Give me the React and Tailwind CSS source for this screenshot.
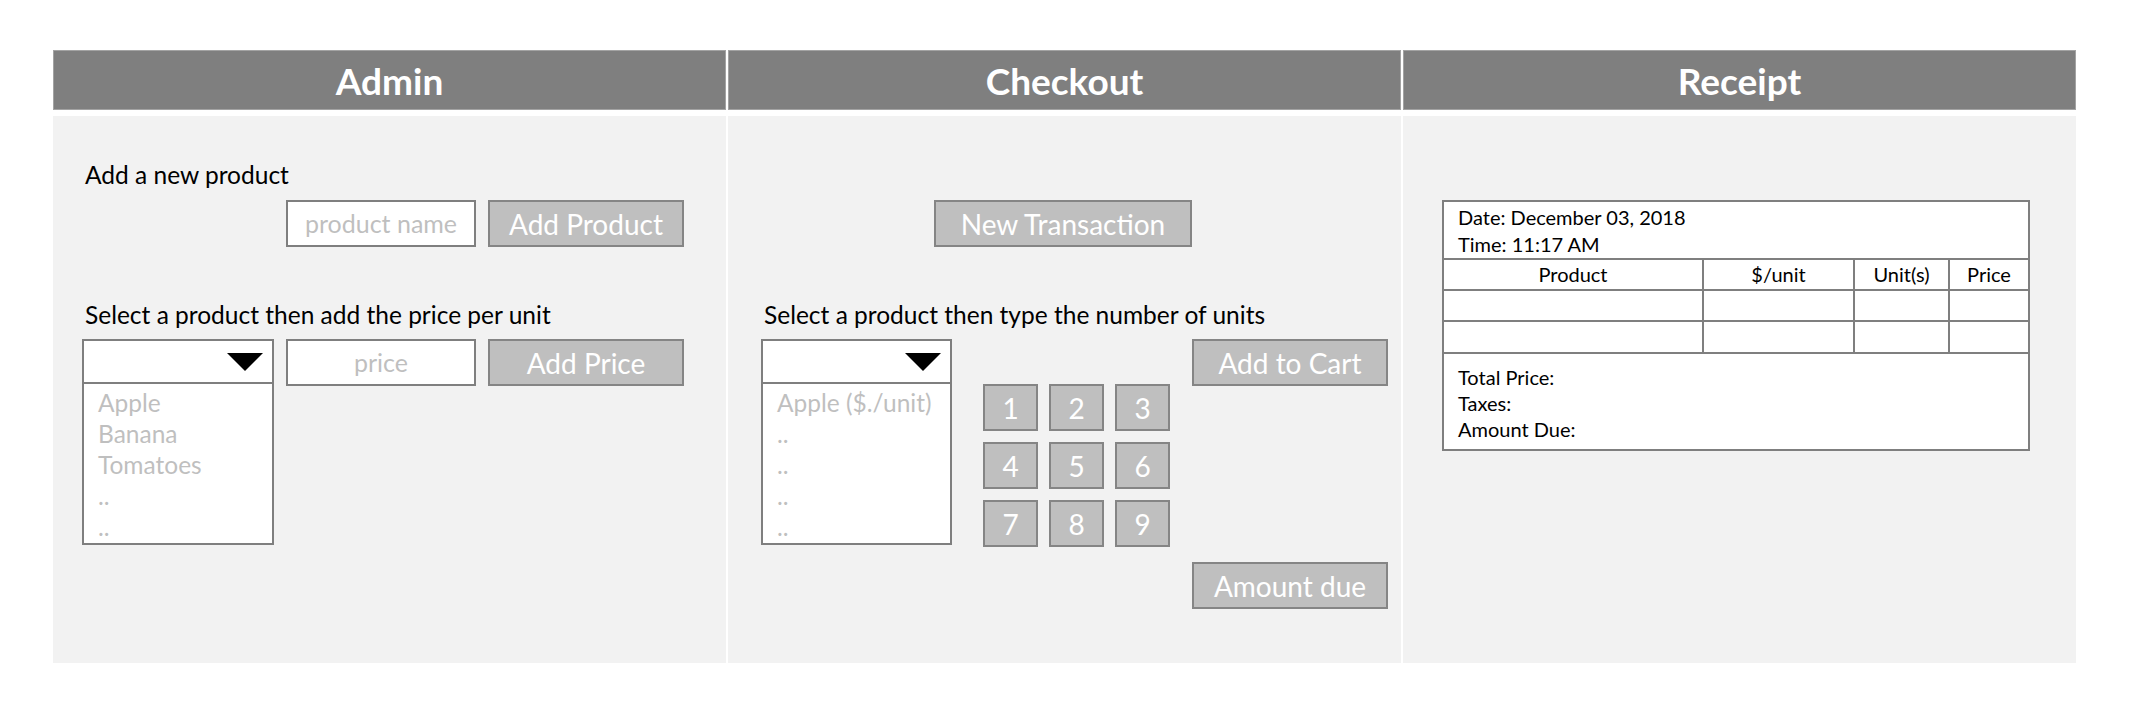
const btn =
  "flex items-center justify-center border-2 border-[#858585] bg-[#bfbfbf] text-white";
const field =
  "flex items-center justify-center border-2 border-[#7f7f7f] bg-white text-[#bfbfbf]";

function Panel({ title, children }) {
  return (
    <div className="w-[673px]">
      <div className="flex h-[60px] items-center justify-center border border-[#a3a3a3] bg-[#7f7f7f] pt-[2px] text-[37px] font-bold text-white">
        {title}
      </div>
      <div className="mt-[6px] h-[547px] bg-[#f2f2f2]">{children}</div>
    </div>
  );
}

function Dropdown({ width, items }) {
  return (
    <div className={`border-2 border-[#7f7f7f] bg-white ${width}`}>
      <div className="flex h-[43px] items-center justify-end border-b-2 border-[#7f7f7f] pr-[9px]">
        <svg width="36" height="18" viewBox="0 0 36 18">
          <polygon points="0,0 36,0 18,18" fill="#000" />
        </svg>
      </div>
      <div className="h-[159px] pl-[14px] pt-[3px] text-[24.5px] leading-[31px] text-[#bfbfbf]">
        {items.map((it, i) => (
          <div key={i}>{it}</div>
        ))}
      </div>
    </div>
  );
}

function Admin() {
  return (
    <div className="pl-[29px] pt-[43px]">
      <p className="pl-[3px] text-[24.5px] leading-[32px] text-black">Add a new product</p>
      <div className="mt-[9px] grid grid-cols-[192px_190px_196px] gap-x-[12px]">
        <div />
        <div className={`${field} h-[47px] text-[25px]`}>product name</div>
        <div className={`${btn} h-[47px] text-[28px]`}>Add Product</div>
      </div>
      <p className="mt-[52px] pl-[3px] text-[24.5px] leading-[32px] text-black">
        Select a product then add the price per unit
      </p>
      <div className="mt-[8px] grid grid-cols-[192px_190px_196px] items-start gap-x-[12px]">
        <Dropdown width="w-[192px]" items={["Apple", "Banana", "Tomatoes", "..", ".."]} />
        <div className={`${field} h-[47px] text-[25px]`}>price</div>
        <div className={`${btn} h-[47px] text-[28px]`}>Add Price</div>
      </div>
    </div>
  );
}

function Checkout() {
  const keys = ["1", "2", "3", "4", "5", "6", "7", "8", "9"];
  return (
    <div className="pt-[84px]">
      <div className="flex justify-center pr-[3px]">
        <div className={`${btn} h-[47px] w-[258px] text-[28px]`}>New Transaction</div>
      </div>
      <div className="pl-[33px]">
        <p className="mt-[52px] pl-[3px] text-[24.5px] leading-[32px] text-black">
          Select a product then type the number of units
        </p>
        <div className="mt-[8px] flex items-start">
          <Dropdown width="w-[191px]" items={["Apple ($./unit)", "..", "..", "..", ".."]} />
          <div className="ml-[31px] mt-[45px] grid grid-cols-[55px_55px_55px] gap-[11px]">
            {keys.map((k) => (
              <div key={k} className={`${btn} h-[47px] text-[28px]`}>
                {k}
              </div>
            ))}
          </div>
          <div className="ml-[22px] flex flex-col">
            <div className={`${btn} h-[47px] w-[196px] text-[28px]`}>Add to Cart</div>
            <div className={`${btn} mt-[176px] h-[47px] w-[196px] text-[28px]`}>Amount due</div>
          </div>
        </div>
      </div>
    </div>
  );
}

function Receipt() {
  const cols = "grid grid-cols-[258px_151px_95px_80px] border-b-2 border-[#7f7f7f]";
  const cell = "border-l-2 border-[#7f7f7f]";
  return (
    <div className="pl-[39px] pt-[84px]">
      <div className="w-[588px] border-2 border-[#7f7f7f] bg-white text-[20px] text-black">
        <div className="h-[58px] border-b-2 border-[#7f7f7f] pl-[14px] pt-[2px] leading-[27px]">
          <div>Date: December 03, 2018</div>
          <div>Time: 11:17 AM</div>
        </div>
        <div className={`${cols} h-[31px] leading-[29px]`}>
          <div className="text-center">Product</div>
          <div className={`${cell} text-center`}>$/unit</div>
          <div className={`${cell} text-center`}>Unit(s)</div>
          <div className={`${cell} text-center`}>Price</div>
        </div>
        <div className={`${cols} h-[31px]`}>
          <div />
          <div className={cell} />
          <div className={cell} />
          <div className={cell} />
        </div>
        <div className={`${cols} h-[32px]`}>
          <div />
          <div className={cell} />
          <div className={cell} />
          <div className={cell} />
        </div>
        <div className="h-[95px] pl-[14px] pt-[10px] leading-[26px]">
          <div>Total Price:</div>
          <div>Taxes:</div>
          <div>Amount Due:</div>
        </div>
      </div>
    </div>
  );
}

export default function App() {
  return (
    <div className="min-h-screen bg-white pl-[53px] pt-[50px] font-['Lato',sans-serif]">
      <div className="flex gap-[2px]">
        <Panel title="Admin">
          <Admin />
        </Panel>
        <Panel title="Checkout">
          <Checkout />
        </Panel>
        <Panel title="Receipt">
          <Receipt />
        </Panel>
      </div>
    </div>
  );
}
